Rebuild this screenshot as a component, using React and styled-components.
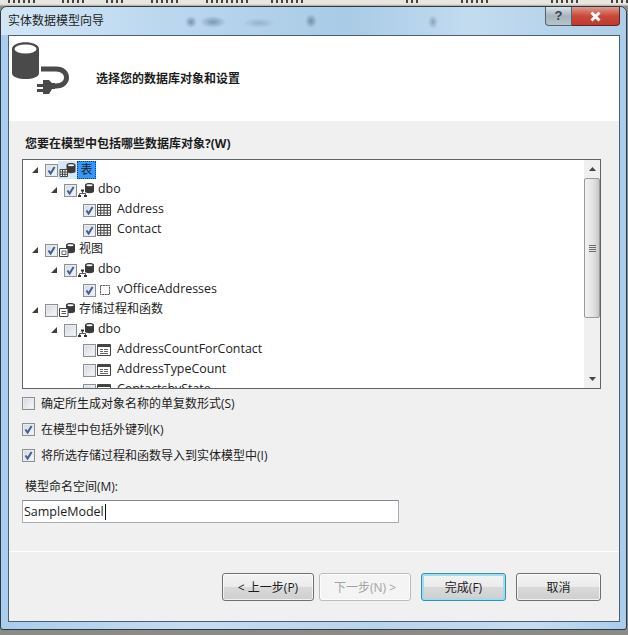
import React from 'react';
import styled, { createGlobalStyle } from 'styled-components';

const Global = createGlobalStyle`
  html, body { margin:0; padding:0; background:#8d8b86; }
  body { width:628px; height:635px; overflow:hidden; font-family:"Open Sans","Noto Sans CJK SC",sans-serif; font-size:12px; color:#1c1c1c; }
  * { box-sizing:border-box; }
`;

const Page = styled.div`
  width:628px;
  height:635px;
  background:linear-gradient(#e9e6df 0, #e9e6df 6px, #8d8b86 6px);
  overflow:hidden;
`;

// the app behind the dialog only peeks out as a row of cut-off marks
const Backdrop = styled.div`
  height:6px;
  display:flex;
  background:linear-gradient(#e9e6df 0,#e9e6df 4px,#a9a7a2 6px);
`;

const Smudge = styled.span`
  width:${p => p.$w}px;
  height:3px;
  flex:none;
  margin-left:${p => p.$gap}px;
  background:repeating-linear-gradient(90deg,#444 0 2px,transparent 2px 5px);
`;

const Win = styled.div`
  width:627px;
  height:624px;
  border:1px solid #2d3a46;
  border-radius:7px 7px 3px 3px;
  background:linear-gradient(90deg,#a9cdee,#c6dcf2 30%,#b9d4ee 60%,#c6dcf2 85%,#a9cdee);
  display:flex;
  flex-direction:column;
  overflow:hidden;
`;

const TitleBar = styled.div`
  height:28px;
  flex:none;
  display:flex;
  justify-content:space-between;
  align-items:flex-start;
  background:
    radial-gradient(ellipse 6px 6px at 190px 15px,rgba(70,90,110,.55),transparent),
    radial-gradient(ellipse 13px 6px at 212px 15px,rgba(70,90,110,.5),transparent),
    radial-gradient(ellipse 16px 5px at 258px 16px,rgba(90,110,130,.3),transparent),
    radial-gradient(ellipse 6px 7px at 310px 14px,rgba(70,90,110,.55),transparent),
    radial-gradient(ellipse 5px 7px at 432px 15px,rgba(70,90,110,.4),transparent),
    linear-gradient(90deg,#d3e6f6 0,#bcd8ef 25%,#a9cbe6 55%,#c2dbef 75%,#aecde6 100%);
`;

const Title = styled.div`
  padding:6px 0 0 7px;
  font-size:12px;
  line-height:16px;
  color:#222;
`;

const Controls = styled.div`
  display:flex;
  margin-right:6px;
`;

const HelpBtn = styled.div`
  width:27px;
  height:19px;
  border:1px solid #56626e;
  border-top:0;
  border-radius:0 0 0 4px;
  background:linear-gradient(#d8e2ea,#a6b3bd 50%,#b6c4ce);
  color:#39444e;
  font:700 13px/18px "Liberation Sans",sans-serif;
  text-align:center;
`;

const CloseBtn = styled.div`
  width:48px;
  height:19px;
  border:1px solid #56262a;
  border-top:0;
  border-left:0;
  border-radius:0 0 4px 0;
  background:linear-gradient(#dc9c8e,#c9483a 50%,#c23a2c);
  display:flex;
  align-items:center;
  justify-content:center;
`;

const Client = styled.div`
  flex:1;
  margin:0 6px 7px 7px;
  border:1px solid #4b5f70;
  background:#f0f0f0;
  display:flex;
  flex-direction:column;
`;

const Header = styled.div`
  height:85px;
  flex:none;
  background:#fff;
  display:flex;
  align-items:center;
  padding:0 0 0 2px;
  font-weight:700;
`;

const Logo = styled.svg`
  width:66px;
  height:62px;
  flex:none;
  margin-top:-12px;
`;

const HeaderTitle = styled.div`
  margin:-2px 0 0 19px;
  font-size:12px;
`;

const Content = styled.div`
  flex:1;
  display:flex;
  flex-direction:column;
  padding:0 18px 0 13px;
`;

const Question = styled.div`
  margin:15px 0 0 3px;
  height:16px;
  line-height:16px;
  font-weight:700;
`;

const TreeBox = styled.div`
  margin-top:7px;
  width:579px;
  height:230px;
  flex:none;
  border:1px solid #5e6468;
  background:#fff;
  display:flex;
  overflow:hidden;
`;

const TreeList = styled.div`
  flex:1;
  overflow:hidden;
`;

const Row = styled.div`
  height:20px;
  display:flex;
  align-items:center;
  padding-left:${p => 9 + p.$level * 19}px;
`;

const Arrow = styled.span`
  width:6px;
  height:6px;
  flex:none;
  margin-right:7px;
  background:${p => (p.$show ? '#3f3f3f' : 'transparent')};
  clip-path:polygon(100% 0,100% 100%,0 100%);
`;

const Box = styled.span`
  width:13px;
  height:13px;
  flex:none;
  border:1px solid #8e8f8f;
  background:linear-gradient(135deg,#d4d8dd,#f7f8f9);
  box-shadow:inset 0 0 0 1px #e6ecf3;
  display:inline-flex;
  align-items:center;
  justify-content:center;
`;

const NodeIcon = styled.svg`
  width:${p => (p.$selected ? 19 : 16)}px;
  height:${p => (p.$selected ? 18 : 14)}px;
  flex:none;
  margin-left:${p => (p.$selected ? 0 : 1)}px;
  background:${p => (p.$selected ? '#d6e7f8' : 'none')};
`;

const RowText = styled.span`
  margin:${p => (p.$selected ? '0' : '-2px 0 0 4px')};
  width:${p => (p.$selected ? '19px' : 'auto')};
  line-height:${p => (p.$selected ? '18px' : '16px')};
  text-align:${p => (p.$selected ? 'center' : 'left')};
  font-size:${p => (p.$latin ? '12.4px' : '12px')};
  background:${p => (p.$selected ? '#3399ff' : 'none')};
  outline:${p => (p.$selected ? '1px dotted #173a66' : 'none')};
  outline-offset:-1px;
  color:#222;
  white-space:nowrap;
`;

const Scrollbar = styled.div`
  width:16px;
  flex:none;
  display:flex;
  flex-direction:column;
  background:#f0f0f0;
`;

const ScrollArrow = styled.div`
  height:18px;
  flex:none;
  display:flex;
  align-items:center;
  justify-content:center;
`;

const Thumb = styled.div`
  height:140px;
  flex:none;
  border:1px solid #9a9a9a;
  border-radius:2px;
  background:linear-gradient(90deg,#f1f1f1,#e4e4e4 55%,#c8c8c8);
  display:flex;
  flex-direction:column;
  align-items:center;
  justify-content:center;
  gap:1px;
`;

const Grip = styled.span`
  width:7px;
  height:1px;
  background:#6b6b6b;
`;

const ScrollTrack = styled.div`
  flex:1;
`;

const Options = styled.div`
  display:flex;
  flex-direction:column;
  gap:13px;
  margin-top:8px;
`;

const Option = styled.div`
  height:13px;
  display:flex;
  align-items:center;
  gap:6px;
  white-space:nowrap;
`;

const OptionText = styled.span`
  margin-top:-2px;
`;

const NsLabel = styled.div`
  margin:17px 0 0 3px;
  height:16px;
  line-height:16px;
`;

const NsInput = styled.div`
  margin-top:5px;
  width:377px;
  height:23px;
  border:1px solid #abadb3;
  border-top-color:#7f8a94;
  background:#fff;
  padding-left:1px;
  font-size:12.5px;
  line-height:21px;
  display:flex;
  align-items:center;
`;

const Caret = styled.span`
  width:1px;
  height:16px;
  background:#111;
  margin-left:1px;
`;

const Footer = styled.div`
  height:70px;
  flex:none;
  border-top:1px solid #fff;
  display:flex;
  padding:21px 18px 0 213px;
`;

const Btn = styled.div`
  width:${p => p.$w}px;
  height:28px;
  flex:none;
  margin-left:${p => p.$gap || 0}px;
  border:1px solid ${p => (p.$disabled ? '#bcbcbc' : p.$primary ? '#3c8fa8' : '#707070')};
  border-radius:3px;
  background:${p => (p.$disabled ? '#f4f4f4' : 'linear-gradient(#f3f3f3,#ebebeb 48%,#d9d9d9 52%,#cfcfcf)')};
  box-shadow:${p => (p.$primary ? 'inset 0 0 0 2px #9fdcf0' : 'inset 0 0 0 1px rgba(255,255,255,.7)')};
  color:${p => (p.$disabled ? '#a3a3a3' : '#1c1c1c')};
  display:flex;
  align-items:center;
  justify-content:center;
`;

const Check = () => (
  <svg width="9" height="9" viewBox="0 0 9 9">
    <path d="M1.5 4.5 L3.6 7.6 L7.6 1" fill="none" stroke="#3f5f96" strokeWidth="2" />
  </svg>
);

const CheckBox = ({ on }) => <Box>{on && <Check />}</Box>;

// little database overlay used by the group and schema nodes
const Db = () => (
  <g>
    <path d="M7 2c0-2.600 9-2.600 9 0v6.500c0 2.200-9 2.200-9 0z" fill="#3a3a3a" />
    <ellipse cx="11.500" cy="2.200" rx="3.200" ry="1" fill="#fff" />
  </g>
);

const icons = {
  tables: (
    <>
      <Db />
      <path d="M.5 6.500h7.500v7H.5z M.5 9h7.500 M.5 11.300h7.500 M3 6.500v7 M5.500 6.500v7" fill="#fff" stroke="#444" />
    </>
  ),
  views: (
    <>
      <Db />
      <path d="M.5 5.500h8.500v8H.5z" fill="#fff" stroke="#444" />
      <path d="M3 8h4v3.500H3z" fill="none" stroke="#666" />
    </>
  ),
  procs: (
    <>
      <Db />
      <path d="M.5 5.500h8.500v8H.5z" fill="#fff" stroke="#444" />
      <path d="M2.500 8.500h4.500 M2.500 10.500h4.500" stroke="#555" />
    </>
  ),
  schema: (
    <>
      <Db />
      <path d="M4.500 8v2.500 M1.500 12v-1.500h6V12" fill="none" stroke="#555" />
      <path d="M3 6.500h3v2H3z M0 12h3v2H0z M6 12h3v2H6z" fill="#333" />
    </>
  ),
  table: <path d="M.5 1.500h13v11H.5z M.5 4.500h13 M.5 7.300h13 M.5 10h13 M3.700 1.500v11 M7 1.500v11 M10.300 1.500v11" fill="#fff" stroke="#444" />,
  view: <path d="M3.500 2.500h9v9h-9z" fill="#fff" stroke="#555" strokeDasharray="2 .6" />,
  proc: (
    <>
      <path d="M.5 1.500h13v11H.5z" fill="#fff" stroke="#444" />
      <path d="M1 2h12v2H1z" fill="#444" />
      <path d="M3 6.500h3 M7 6.500h4 M3 8.500h3 M7 8.500h4 M3 10.500h8" stroke="#666" />
    </>
  ),
};

const rows = [
  { level: 0, arrow: true, on: true, icon: 'tables', text: '表', selected: true },
  { level: 1, arrow: true, on: true, icon: 'schema', text: 'dbo', latin: true },
  { level: 2, on: true, icon: 'table', text: 'Address', latin: true },
  { level: 2, on: true, icon: 'table', text: 'Contact', latin: true },
  { level: 0, arrow: true, on: true, icon: 'views', text: '视图' },
  { level: 1, arrow: true, on: true, icon: 'schema', text: 'dbo', latin: true },
  { level: 2, on: true, icon: 'view', text: 'vOfficeAddresses', latin: true },
  { level: 0, arrow: true, icon: 'procs', text: '存储过程和函数' },
  { level: 1, arrow: true, icon: 'schema', text: 'dbo', latin: true },
  { level: 2, icon: 'proc', text: 'AddressCountForContact', latin: true },
  { level: 2, icon: 'proc', text: 'AddressTypeCount', latin: true },
  { level: 2, icon: 'proc', text: 'ContactsbyState', latin: true },
];

const options = [
  { on: false, text: '确定所生成对象名称的单复数形式(S)' },
  { on: true, text: '在模型中包括外键列(K)' },
  { on: true, text: '将所选存储过程和函数导入到实体模型中(I)' },
];

const smudges = [[8, 30], [24, 24], [20, 20], [25, 30], [25, 45], [20, 35], [100, 15], [40, 30], [60, 30], [30, 25], [25, 30]];

export default function App() {
  return (
    <Page>
      <Global />
      <Backdrop>
        {smudges.map(([gap, w], i) => <Smudge key={i} $gap={gap} $w={w} />)}
      </Backdrop>
      <Win>
        <TitleBar>
          <Title>实体数据模型向导</Title>
          <Controls>
            <HelpBtn>?</HelpBtn>
            <CloseBtn>
              <svg width="13" height="11" viewBox="0 0 13 11">
                <path d="M2.500 1.500 L10.500 9.500 M10.500 1.500 L2.500 9.500" stroke="#fff" strokeWidth="3" />
              </svg>
            </CloseBtn>
          </Controls>
        </TitleBar>
        <Client>
          <Header>
            <Logo viewBox="0 0 66 62">
              <path d="M1 7c0-9 27-9 27 0v24c0 8-27 8-27 0z" fill="#4a4a4a" />
              <ellipse cx="14.500" cy="7" rx="11" ry="4.500" fill="#fff" />
              <path d="M30 27h15c14 0 14 17 0 17h-3" fill="none" stroke="#4a4a4a" strokeWidth="5" />
              <path d="M32 38h6l3 3h3v6h-3l-3 5h-6z" fill="#4a4a4a" />
              <path d="M26 42h6v3h-6zM26 47h6v3h-6z" fill="#4a4a4a" />
            </Logo>
            <HeaderTitle>选择您的数据库对象和设置</HeaderTitle>
          </Header>
          <Content>
            <Question>您要在模型中包括哪些数据库对象?(W)</Question>
            <TreeBox>
              <TreeList>
                {rows.map((r, i) => (
                  <Row key={i} $level={r.level}>
                    <Arrow $show={r.arrow} />
                    <CheckBox on={r.on} />
                    <NodeIcon viewBox={r.selected ? '-1.500 -2 19 18' : '0 0 16 14'} $selected={r.selected}>{icons[r.icon]}</NodeIcon>
                    <RowText $selected={r.selected} $latin={r.latin}>{r.text}</RowText>
                  </Row>
                ))}
              </TreeList>
              <Scrollbar>
                <ScrollArrow>
                  <svg width="7" height="4" viewBox="0 0 7 4"><path d="M3.500 0 7 4H0z" fill="#444" /></svg>
                </ScrollArrow>
                <Thumb>
                  <Grip /><Grip /><Grip /><Grip />
                </Thumb>
                <ScrollTrack />
                <ScrollArrow>
                  <svg width="7" height="4" viewBox="0 0 7 4"><path d="M0 0h7L3.500 4z" fill="#444" /></svg>
                </ScrollArrow>
              </Scrollbar>
            </TreeBox>
            <Options>
              {options.map(o => (
                <Option key={o.text}>
                  <CheckBox on={o.on} />
                  <OptionText>{o.text}</OptionText>
                </Option>
              ))}
            </Options>
            <NsLabel>模型命名空间(M):</NsLabel>
            <NsInput>SampleModel<Caret /></NsInput>
          </Content>
          <Footer>
            <Btn $w={92}>&lt; 上一步(P)</Btn>
            <Btn $w={92} $gap={5} $disabled>下一步(N) &gt;</Btn>
            <Btn $w={85} $gap={10} $primary>完成(F)</Btn>
            <Btn $w={85} $gap={10}>取消</Btn>
          </Footer>
        </Client>
      </Win>
    </Page>
  );
}
